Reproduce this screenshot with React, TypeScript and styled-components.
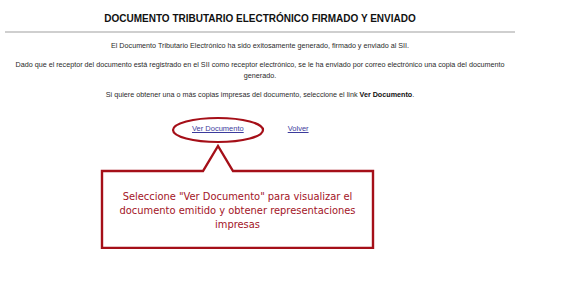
import React from 'react';
import styled, { createGlobalStyle } from 'styled-components';

const GlobalStyle = createGlobalStyle`
  html, body {
    margin: 0;
    padding: 0;
    background: #ffffff;
  }
  body {
    font-family: "Liberation Sans", Arial, sans-serif;
    color: #222222;
  }
`;

const Page = styled.div`
  width: 510px;
  margin-left: 5px;
  padding-top: 12px;
`;

const Title = styled.h1`
  margin: 0;
  font-size: 10px;
  line-height: 13px;
  font-weight: bold;
  text-align: center;
  color: #111111;
`;

const Rule = styled.hr`
  margin: 6px 0 0;
  border: 0;
  border-top: 2px solid #cfcfcf;
`;

const Body = styled.div`
  padding-top: 7px;
  display: flex;
  flex-direction: column;
  gap: 8px;
`;

const Text = styled.p`
  margin: 0;
  font-size: 7.2px;
  line-height: 11px;
  text-align: center;
  color: #2a2a2a;
  b {
    color: #111111;
  }
`;

const Links = styled.div`
  margin-top: 20px;
  margin-left: 187px;
  display: flex;
  gap: 44px;
`;

const LinkWrap = styled.span`
  position: relative;
  display: block;
  line-height: 11px;
`;

const Link = styled.a`
  font-size: 7.5px;
  line-height: 11px;
  color: #3b3b9c;
  text-decoration: underline;
  cursor: pointer;
`;

const Ring = styled.svg`
  position: absolute;
  left: -20px;
  top: -3px;
  overflow: visible;
  pointer-events: none;
`;

const Callout = styled.div`
  position: relative;
  margin-top: 11px;
  margin-left: 96px;
  width: 273px;
  height: 104px;
  box-sizing: border-box;
  padding-top: 45px;
`;

const CalloutShape = styled.svg`
  position: absolute;
  left: 0;
  top: 0;
  overflow: visible;
`;

const CalloutText = styled.p`
  position: relative;
  margin: 0;
  font-family: "DejaVu Sans", Verdana, sans-serif;
  font-stretch: condensed;
  font-size: 11px;
  line-height: 14px;
  text-align: center;
  color: #a3141f;
`;

const App = () => {
  return (
    <>
      <GlobalStyle />
      <Page>
        <Title>DOCUMENTO TRIBUTARIO ELECTRÓNICO FIRMADO Y ENVIADO</Title>
        <Rule />
        <Body>
          <Text>El Documento Tributario Electrónico ha sido exitosamente generado, firmado y enviado al SII.</Text>
          <Text>
            Dado que el receptor del documento está registrado en el SII como receptor electrónico, se le ha enviado por
            correo electrónico una copia del documento
            <br />
            generado.
          </Text>
          <Text>
            Si quiere obtener una o más copias impresas del documento, seleccione el link <b>Ver Documento</b>.
          </Text>
        </Body>
        <Links>
          <LinkWrap>
            <Link>Ver Documento</Link>
            <Ring width="92" height="26" viewBox="0 0 92 26">
              <ellipse cx="46" cy="13" rx="45" ry="12" fill="none" stroke="#a50f18" strokeWidth="2.2" />
            </Ring>
          </LinkWrap>
          <LinkWrap>
            <Link>Volver</Link>
          </LinkWrap>
        </Links>
        <Callout>
          <CalloutShape width="274" height="105" viewBox="0 0 274 105">
            <path
              d="M1 26 H102 L117 1 L132 26 H272 V103 H1 Z"
              fill="#ffffff"
              stroke="#a50f18"
              strokeWidth="2.4"
              strokeLinejoin="miter"
            />
          </CalloutShape>
          <CalloutText>
            Seleccione "Ver Documento" para visualizar el
            <br />
            documento emitido y obtener representaciones
            <br />
            impresas
          </CalloutText>
        </Callout>
      </Page>
    </>
  );
};

export default App;
